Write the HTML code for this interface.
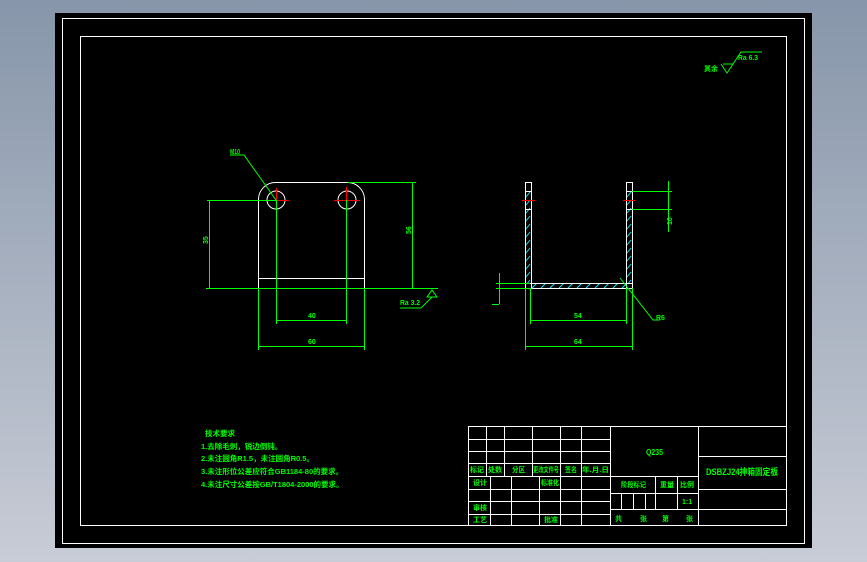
<!DOCTYPE html>
<html><head><meta charset="utf-8"><style>
html,body{margin:0;padding:0;width:867px;height:562px;overflow:hidden;background:linear-gradient(#8796aa,#c8ccd6);}
svg{display:block}
text{font-family:"Liberation Sans","Noto Sans CJK SC",sans-serif;fill:#00ff00;font-weight:bold}
</style></head><body>
<svg width="867" height="562" viewBox="0 0 867 562" xmlns="http://www.w3.org/2000/svg">
<defs>
<pattern id="hl" x="525" y="183" width="7" height="8" patternUnits="userSpaceOnUse">
<line x1="1" y1="6" x2="5" y2="1" stroke="#00e5ff" stroke-width="1"/>
</pattern>
<pattern id="hr" x="626" y="183" width="7" height="8" patternUnits="userSpaceOnUse">
<line x1="1" y1="6" x2="5" y2="1" stroke="#00e5ff" stroke-width="1"/>
</pattern>
<pattern id="hb" x="531" y="283" width="9" height="6" patternUnits="userSpaceOnUse">
<line x1="1" y1="5" x2="6" y2="0" stroke="#00e5ff" stroke-width="1"/>
</pattern>
</defs>
<rect x="55" y="13" width="757" height="535" fill="#000"/>
<g fill="none" stroke="#fff" stroke-width="1">
<rect x="62.5" y="18.5" width="742" height="525"/>
<rect x="80.5" y="36.5" width="706" height="489"/>
</g>

<!-- Left view -->
<g fill="none" stroke="#fff" stroke-width="1">
<path d="M258.5 288.5 V199 A17 17 0 0 1 275.5 182.5 H347.5 A17 17 0 0 1 364.5 199 V288.5 Z"/>
<line x1="258" y1="278.5" x2="364" y2="278.5"/>
<circle cx="276" cy="200" r="9"/>
<circle cx="347" cy="200" r="9"/>
</g>
<g stroke="#f00" stroke-width="1">
<line x1="265" y1="200.5" x2="289" y2="200.5"/><line x1="276.5" y1="188" x2="276.5" y2="212"/>
<line x1="334" y1="200.5" x2="360" y2="200.5"/><line x1="346.5" y1="187" x2="346.5" y2="213"/>
</g>
<g stroke="#00ff00" stroke-width="1" fill="none">
<line x1="207" y1="200.5" x2="276" y2="200.5"/>
<line x1="209.5" y1="200" x2="209.5" y2="288"/>
<line x1="206" y1="288.5" x2="438" y2="288.5"/>
<line x1="348" y1="182.5" x2="416" y2="182.5"/>
<line x1="412.5" y1="182" x2="412.5" y2="288"/>
<line x1="276.5" y1="200" x2="276.5" y2="324"/>
<line x1="346.5" y1="200" x2="346.5" y2="324"/>
<line x1="276" y1="320.5" x2="347" y2="320.5"/>
<line x1="258.5" y1="288" x2="258.5" y2="350"/>
<line x1="364.5" y1="288" x2="364.5" y2="350"/>
<line x1="258" y1="346.5" x2="364" y2="346.5"/>
<polyline points="276,200 244,155 230,155"/>
<polygon points="427,297 432,290 437,297"/>
<polyline points="432,297 421,308 400,308"/>
</g>
<text x="230" y="154" font-size="7" textLength="10" lengthAdjust="spacingAndGlyphs">M10</text>
<text x="204" y="248" font-size="7" transform="rotate(-90 204 244)">35</text>
<text x="409" y="240" font-size="7" transform="rotate(-90 407 236)">56</text>
<text x="308" y="318" font-size="7">40</text>
<text x="308" y="344" font-size="7">60</text>
<text x="400" y="305" font-size="7" textLength="20" lengthAdjust="spacingAndGlyphs">Ra 3.2</text>

<!-- Right view -->
<rect x="525.5" y="182.5" width="6" height="106" fill="url(#hl)" stroke="#fff"/>
<rect x="626.5" y="182.5" width="6" height="106" fill="url(#hr)" stroke="#fff"/>
<rect x="525.5" y="283.5" width="107" height="5" fill="url(#hb)" stroke="#fff"/>
<rect x="526" y="284" width="5" height="4" fill="#000"/>
<rect x="627" y="284" width="5" height="4" fill="#000"/>
<rect x="526" y="183" width="5" height="8" fill="#000"/>
<rect x="627" y="183" width="5" height="8" fill="#000"/>
<g stroke="#fff"><line x1="525" y1="191.5" x2="531" y2="191.5"/><line x1="626" y1="191.5" x2="632" y2="191.5"/><line x1="525" y1="209.5" x2="531" y2="209.5"/><line x1="626" y1="209.5" x2="632" y2="209.5"/></g>
<g stroke="#f00"><line x1="522" y1="200.5" x2="535" y2="200.5"/><line x1="623" y1="200.5" x2="635" y2="200.5"/></g>
<g stroke="#00ff00" stroke-width="1" fill="none">
<line x1="632" y1="191.5" x2="672" y2="191.5"/>
<line x1="632" y1="209.5" x2="672" y2="209.5"/>
<line x1="668.5" y1="181" x2="668.5" y2="232"/>
<line x1="496" y1="283.5" x2="530" y2="283.5"/>
<line x1="496" y1="288.5" x2="530" y2="288.5"/>
<line x1="499.5" y1="273" x2="499.5" y2="304"/>
<line x1="492" y1="304.5" x2="499" y2="304.5"/>
<line x1="530.5" y1="288" x2="530.5" y2="324"/>
<line x1="626.5" y1="288" x2="626.5" y2="324"/>
<line x1="530" y1="320.5" x2="626" y2="320.5"/>
<line x1="525.5" y1="288" x2="525.5" y2="350"/>
<line x1="632.5" y1="288" x2="632.5" y2="350"/>
<line x1="525" y1="346.5" x2="632" y2="346.5"/>
<polyline points="620,278 653,320 660,320"/>
</g>
<text x="665" y="232" font-size="7" transform="rotate(-90 665 225)">10</text>
<text x="574" y="318" font-size="7">54</text>
<text x="574" y="344" font-size="7">64</text>
<text x="656" y="320" font-size="7">R6</text>

<!-- roughness top right -->
<g stroke="#00ff00" fill="none"><polyline points="721,64 727,73 741,52 762,52"/><line x1="723" y1="64" x2="733" y2="64"/></g>
<text x="704" y="71" font-size="7">其余</text>
<text x="738" y="60" font-size="7" textLength="20" lengthAdjust="spacingAndGlyphs">Ra 6.3</text>

<!-- notes -->
<g font-size="7.5">
<text x="205" y="436">技术要求</text>
<text x="201" y="449">1.去除毛刺，锐边倒钝。</text>
<text x="201" y="461">2.未注圆角R1.5，未注圆角R0.5。</text>
<text x="201" y="474">3.未注形位公差应符合GB1184-80的要求。</text>
<text x="201" y="487">4.未注尺寸公差按GB/T1804-2000的要求。</text>
</g>

<!-- title block -->
<g stroke="#fff" stroke-width="1" fill="none">
<rect x="468.5" y="426.5" width="318" height="99"/>
<line x1="468" y1="439.5" x2="610" y2="439.5"/>
<line x1="468" y1="451.5" x2="610" y2="451.5"/>
<line x1="468" y1="463.5" x2="610" y2="463.5"/>
<line x1="468" y1="476.5" x2="698" y2="476.5"/>
<line x1="468" y1="489.5" x2="610" y2="489.5"/>
<line x1="468" y1="501.5" x2="610" y2="501.5"/>
<line x1="468" y1="514.5" x2="610" y2="514.5"/>
<line x1="486.5" y1="426" x2="486.5" y2="476"/>
<line x1="504.5" y1="426" x2="504.5" y2="476"/>
<line x1="532.5" y1="426" x2="532.5" y2="476"/>
<line x1="560.5" y1="426" x2="560.5" y2="525"/>
<line x1="581.5" y1="426" x2="581.5" y2="525"/>
<line x1="490.5" y1="476" x2="490.5" y2="525"/>
<line x1="511.5" y1="476" x2="511.5" y2="525"/>
<line x1="539.5" y1="476" x2="539.5" y2="525"/>
<line x1="610.5" y1="426" x2="610.5" y2="525"/>
<line x1="698.5" y1="426" x2="698.5" y2="525"/>
<line x1="610" y1="493.5" x2="698" y2="493.5"/>
<line x1="610" y1="509.5" x2="786" y2="509.5"/>
<line x1="655.5" y1="476" x2="655.5" y2="509"/>
<line x1="677.5" y1="476" x2="677.5" y2="509"/>
<line x1="621.5" y1="493" x2="621.5" y2="509"/>
<line x1="633.5" y1="493" x2="633.5" y2="509"/>
<line x1="645.5" y1="493" x2="645.5" y2="509"/>
<line x1="698" y1="456.5" x2="786" y2="456.5"/>
<line x1="698" y1="489.5" x2="786" y2="489.5"/>
</g>
<g font-size="7">
<text x="470" y="472" textLength="14" lengthAdjust="spacingAndGlyphs">标记</text>
<text x="488" y="472" textLength="14" lengthAdjust="spacingAndGlyphs">处数</text>
<text x="512" y="472" textLength="13" lengthAdjust="spacingAndGlyphs">分区</text>
<text x="533" y="472" textLength="26" lengthAdjust="spacingAndGlyphs">更改文件号</text>
<text x="565" y="472" textLength="12" lengthAdjust="spacingAndGlyphs">签名</text>
<text x="582" y="472" textLength="27" lengthAdjust="spacingAndGlyphs">年.月.日</text>
<text x="473" y="485">设计</text><text x="541" y="485" textLength="18" lengthAdjust="spacingAndGlyphs">标准化</text>
<text x="473" y="510">审核</text>
<text x="473" y="522">工艺</text><text x="544" y="522">批准</text>
<text x="621" y="487" textLength="25" lengthAdjust="spacingAndGlyphs">阶段标记</text><text x="660" y="487">重量</text><text x="680" y="487">比例</text>
<text x="682" y="504">1:1</text>
<text x="615" y="521">共</text><text x="640" y="521">张</text><text x="662" y="521">第</text><text x="686" y="521">张</text>
</g>
<text x="646" y="455" font-size="8" font-weight="normal" textLength="17" lengthAdjust="spacingAndGlyphs">Q235</text>
<text x="706" y="475" font-size="9" textLength="72" lengthAdjust="spacingAndGlyphs">DSBZJ24抻箱固定板</text>
</svg>
</body></html>
